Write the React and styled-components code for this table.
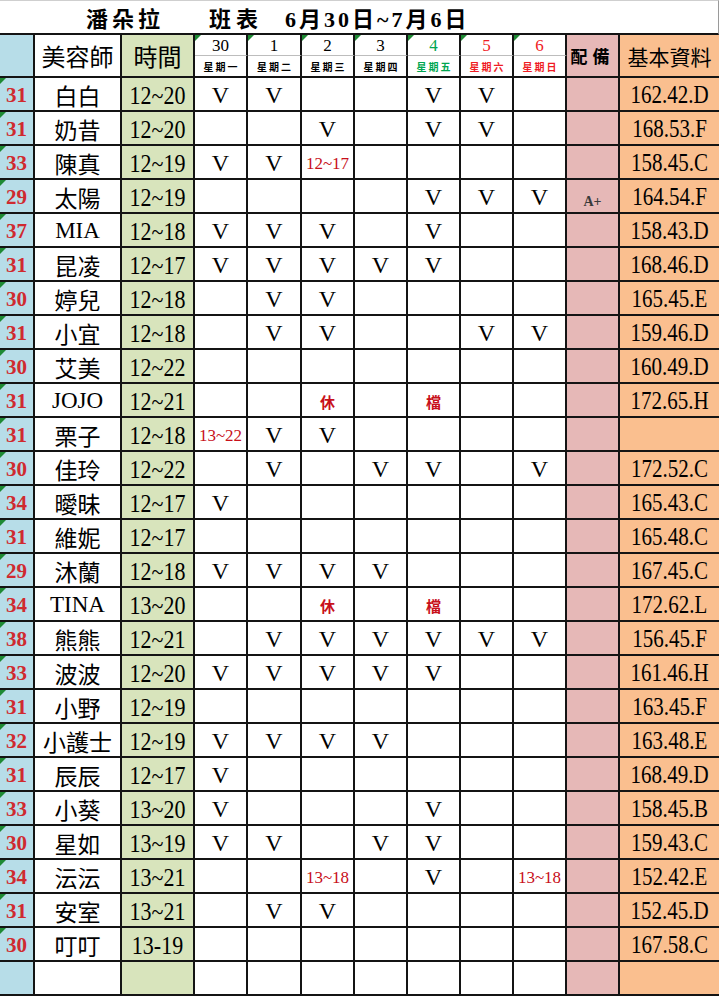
import React from "react";
import styled, { createGlobalStyle, css } from "styled-components";

const GlobalStyle = createGlobalStyle`
  html, body { margin: 0; padding: 0; background: #ffffff; }
  body { font-family: "Liberation Serif", "Noto Sans CJK TC", serif; }
`;

const LINE = "#141414";
const SERIF = `"Liberation Serif", "Noto Sans CJK TC", serif`;
const CJK = `"Noto Sans CJK TC", "Liberation Serif", sans-serif`;

const Sheet = styled.div`
  display: grid;
  width: 719px;
  grid-template-columns: 35px 87px 73px 53px 54px 53px 53px 53px 53px 53px 53px 99px;
  grid-template-rows: 35px 21px 22px repeat(27, 34px);
  font-family: ${SERIF};
  color: #000;
`;

const TitleBar = styled.div`
  grid-column: 1 / -1;
  box-sizing: border-box;
  border-top: 1px solid #cfcfcf;
  border-right: 1px solid #9a9a9a;
  border-bottom: 2px solid ${LINE};
  display: flex;
  align-items: center;
  padding-left: 86px;
  font-family: ${SERIF};
  font-weight: 700;
  font-size: 22px;
  white-space: pre;
`;

const TitlePart = styled.span`
  letter-spacing: ${(p) => p.$spacing ?? 4}px;
  margin-right: ${(p) => p.$gap || 0}px;
`;

const Cell = styled.div`
  box-sizing: border-box;
  position: relative;
  display: flex;
  align-items: center;
  justify-content: center;
  border-right: ${(p) => (p.$last ? "none" : `2px solid ${LINE}`)};
  border-bottom: 2px solid ${LINE};
  background: ${(p) => p.$bg || "#ffffff"};
  white-space: nowrap;
  ${(p) =>
    p.$flag &&
    css`
      &::before {
        content: "";
        position: absolute;
        top: 0;
        left: 0;
        width: 0;
        height: 0;
        border-top: 6px solid #1e8a34;
        border-right: 6px solid transparent;
      }
    `}
`;

const HeadCell = styled(Cell)`
  grid-row: span 2;
  font-family: ${CJK};
  font-size: ${(p) => p.$size || 24}px;
  font-weight: ${(p) => p.$weight || 400};
  letter-spacing: ${(p) => p.$spacing || 0}px;
`;

const DateCell = styled(Cell)`
  border-bottom: 1px solid #bdbdbd;
  font-size: 17px;
  color: ${(p) => p.$color};
  padding-top: 2px;
`;

const WeekCell = styled(Cell)`
  font-family: ${CJK};
  font-size: 10px;
  font-weight: 700;
  letter-spacing: 2px;
  color: ${(p) => p.$color};
  padding-left: 2px;
`;

const NumCell = styled(Cell)`
  background: #b7dde8;
  color: #cf2a2f;
  font-weight: 700;
  font-size: 21px;
  padding-top: 3px;
`;

const NameCell = styled(Cell)`
  font-size: 23px;
  padding-top: 2px;
`;

const TimeCell = styled(Cell)`
  background: #d8e4bc;
  font-size: 22px;
  padding-top: 3px;
`;

const DayCell = styled(Cell)`
  padding-top: 3px;
`;

const NoteCell = styled(Cell)`
  background: #e6b8b7;
  padding-top: 12px;
`;

const BasicCell = styled(Cell)`
  background: #fabf8f;
  font-size: 21px;
  padding-top: 3px;
`;

const Tall = styled.span`
  display: inline-block;
  transform: scaleY(${(p) => p.$y || 1.15});
`;

const Mark = styled.span`
  font-size: 24px;
`;

const RedTime = styled.span`
  font-size: 17px;
  color: #c8101a;
`;

const RestText = styled.span`
  font-family: ${CJK};
  font-size: 15px;
  font-weight: 700;
  color: #c8101a;
`;

const NoteText = styled.span`
  font-size: 14px;
  font-weight: 700;
  color: #3a3a3a;
`;

const days = [
  { d: "30", w: "星期一", c: "#000000" },
  { d: "1", w: "星期二", c: "#000000" },
  { d: "2", w: "星期三", c: "#000000" },
  { d: "3", w: "星期四", c: "#000000" },
  { d: "4", w: "星期五", c: "#00a651" },
  { d: "5", w: "星期六", c: "#ef1c24" },
  { d: "6", w: "星期日", c: "#ef1c24" },
];

const E = ["", "", "", "", "", "", ""];

const rows = [
  ["31", "白白", "12~20", ["V", "V", "", "", "V", "V", ""], "", "162.42.D"],
  ["31", "奶昔", "12~20", ["", "", "V", "", "V", "V", ""], "", "168.53.F"],
  ["33", "陳真", "12~19", ["V", "V", "12~17", "", "", "", ""], "", "158.45.C"],
  ["29", "太陽", "12~19", ["", "", "", "", "V", "V", "V"], "A+", "164.54.F"],
  ["37", "MIA", "12~18", ["V", "V", "V", "", "V", "", ""], "", "158.43.D"],
  ["31", "昆凌", "12~17", ["V", "V", "V", "V", "V", "", ""], "", "168.46.D"],
  ["30", "婷兒", "12~18", ["", "V", "V", "", "", "", ""], "", "165.45.E"],
  ["31", "小宜", "12~18", ["", "V", "V", "", "", "V", "V"], "", "159.46.D"],
  ["30", "艾美", "12~22", E, "", "160.49.D"],
  ["31", "JOJO", "12~21", ["", "", "休", "", "檔", "", ""], "", "172.65.H"],
  ["31", "栗子", "12~18", ["13~22", "V", "V", "", "", "", ""], "", ""],
  ["30", "佳玲", "12~22", ["", "V", "", "V", "V", "", "V"], "", "172.52.C"],
  ["34", "曖昧", "12~17", ["V", "", "", "", "", "", ""], "", "165.43.C"],
  ["31", "維妮", "12~17", E, "", "165.48.C"],
  ["29", "沐蘭", "12~18", ["V", "V", "V", "V", "", "", ""], "", "167.45.C"],
  ["34", "TINA", "13~20", ["", "", "休", "", "檔", "", ""], "", "172.62.L"],
  ["38", "熊熊", "12~21", ["", "V", "V", "V", "V", "V", "V"], "", "156.45.F"],
  ["33", "波波", "12~20", ["V", "V", "V", "V", "V", "", ""], "", "161.46.H"],
  ["31", "小野", "12~19", E, "", "163.45.F"],
  ["32", "小護士", "12~19", ["V", "V", "V", "V", "", "", ""], "", "163.48.E"],
  ["31", "辰辰", "12~17", ["V", "", "", "", "", "", ""], "", "168.49.D"],
  ["33", "小葵", "13~20", ["V", "", "", "", "V", "", ""], "", "158.45.B"],
  ["30", "星如", "13~19", ["V", "V", "", "V", "V", "", ""], "", "159.43.C"],
  ["34", "沄沄", "13~21", ["", "", "13~18", "", "V", "", "13~18"], "", "152.42.E"],
  ["31", "安室", "13~21", ["", "V", "V", "", "", "", ""], "", "152.45.D"],
  ["30", "叮叮", "13-19", E, "", "167.58.C"],
  ["", "", "", E, "", ""],
];

function DayContent({ value }) {
  if (!value) return null;
  if (value === "V") return <Mark>V</Mark>;
  if (value.length === 1) return <RestText>{value}</RestText>;
  return <RedTime>{value}</RedTime>;
}

export default function App() {
  return (
    <>
      <GlobalStyle />
      <Sheet>
        <TitleBar>
          <TitlePart $gap={45}>潘朵拉</TitlePart>
          <TitlePart $gap={22} $spacing={5}>班表</TitlePart>
          <TitlePart $spacing={3}>6月30日~7月6日</TitlePart>
        </TitleBar>

        <HeadCell $bg="#b7dde8" />
        <HeadCell>美容師</HeadCell>
        <HeadCell $bg="#d8e4bc">時間</HeadCell>
        {days.map((day) => (
          <DateCell key={`d${day.d}`} $flag $color={day.c}>
            {day.d}
          </DateCell>
        ))}
        <HeadCell $bg="#e6b8b7" $size={17} $weight={700} $spacing={5}>
          配備
        </HeadCell>
        <HeadCell $bg="#fabf8f" $size={21} $last>
          基本資料
        </HeadCell>
        {days.map((day) => (
          <WeekCell key={`w${day.d}`} $color={day.c}>
            {day.w}
          </WeekCell>
        ))}

        {rows.map(([num, name, time, marks, note, basic], i) => (
          <React.Fragment key={i}>
            <NumCell $flag={!!num}>{num}</NumCell>
            <NameCell>{name}</NameCell>
            <TimeCell>
              <Tall $y={1.12}>{time}</Tall>
            </TimeCell>
            {marks.map((m, j) => (
              <DayCell key={j}>
                <DayContent value={m} />
              </DayCell>
            ))}
            <NoteCell>{note && <NoteText>{note}</NoteText>}</NoteCell>
            <BasicCell $last>
              <Tall $y={1.2}>{basic}</Tall>
            </BasicCell>
          </React.Fragment>
        ))}
      </Sheet>
    </>
  );
}
